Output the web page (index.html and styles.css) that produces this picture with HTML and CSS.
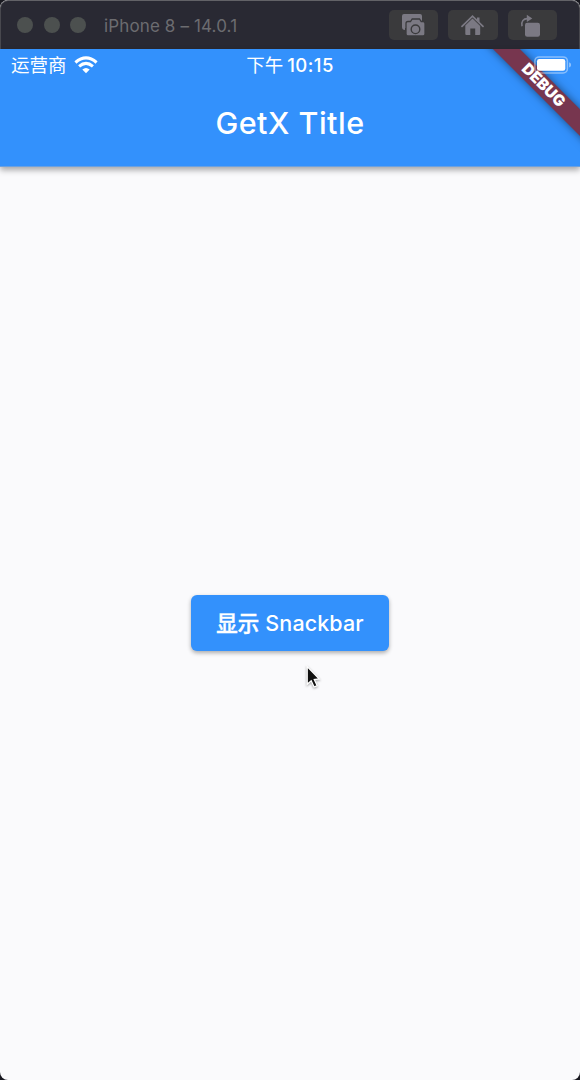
FILE: index.html
```html
<!DOCTYPE html>
<html lang="zh-CN">
<head>
<meta charset="utf-8">
<title>iPhone 8 – 14.0.1</title>
<link rel="stylesheet" href="styles.css">
</head>
<body>
<div class="window">
  <header class="titlebar">
    <div class="lights"><i></i><i></i><i></i></div>
    <span class="device">iPhone 8 – 14.0.1</span>
    <div class="tools">
      <div class="tool">
        <svg width="49" height="30" viewBox="0 0 49 30">
          <path d="M15 4H31Q33 4 33 6V18H16V20Q13 20 13 17V6Q13 4 15 4Z" fill="#7b7983"/>
          <path d="M19 11.5H21.5L23.2 9H30.5L32.2 11.5H34Q36 11.5 36 13.5V24Q36 26 34 26H19Q17 26 17 24V13.5Q17 11.5 19 11.5Z" fill="#7b7983" stroke="#3a3a3c" stroke-width="1.3"/>
          <circle cx="26.5" cy="19.3" r="4.3" fill="#7b7983" stroke="#3a3a3c" stroke-width="1.4"/>
        </svg>
      </div>
      <div class="tool">
        <svg width="49" height="30" viewBox="0 0 49 30">
          <path d="M14 16.3L24.5 6.2L35 16.3" fill="none" stroke="#7b7983" stroke-width="1.8" stroke-linecap="round"/>
          <path d="M29 7.5H31.5V13L29 10.6Z" fill="#7b7983"/>
          <path d="M24.5 8.6L32.2 15.9V24Q32.2 25 31.2 25H27.2V18.5H22.3V25H18.3Q17.3 25 17.3 24V15.6Z" fill="#7b7983"/>
        </svg>
      </div>
      <div class="tool">
        <svg width="49" height="30" viewBox="0 0 49 30">
          <rect x="17" y="12.7" width="15" height="14" rx="2.2" fill="#7b7983"/>
          <path d="M14 16.3C12.8 11.5 15.5 8.5 19.5 8.6" fill="none" stroke="#7b7983" stroke-width="1.6"/>
          <path d="M18.8 4.8L24.3 8.6L18.8 12Z" fill="#7b7983"/>
        </svg>
      </div>
    </div>
  </header>
  <main class="screen">
    <div class="appbar">
      <div class="debug-clip"><div class="debug"><span>DEBUG</span></div></div>
      <div class="status">
        <div class="carrier">
          <span>运营商</span>
          <svg width="24" height="18" viewBox="0 0 24 18">
            <g fill="none" stroke="#fff" stroke-width="3">
              <path d="M1.4 6.5Q12 -2.8 22.6 6.5"/>
              <path d="M5.1 10.4Q12 4.4 18.9 10.4"/>
            </g>
            <path d="M8.3 13.6Q12 10.4 15.7 13.6L12 17.3Z" fill="#fff"/>
          </svg>
        </div>
        <div class="time"><span>下午</span><b>10:15</b></div>
        <svg class="battery" width="38" height="18" viewBox="0 0 38 18">
          <rect x=".9" y=".9" width="32.5" height="16" rx="4.2" fill="none" stroke="#fff" stroke-opacity=".42" stroke-width="1.5"/>
          <rect x="3" y="3" width="28.3" height="11.8" rx="2.3" fill="#fff"/>
          <path d="M35.2 6.3Q37 7.2 37 8.9T35.2 11.5Z" fill="#fff" fill-opacity=".5"/>
        </svg>
      </div>
      <h1 class="title">GetX Title</h1>
    </div>
    <div class="content">
      <button class="button"><span class="cjk">显示</span><span class="latin">Snackbar</span></button>
    </div>
  </main>
  <svg class="cursor" width="18" height="28" viewBox="0 0 18 28">
    <path d="M2.2 2.5V20.3L6.2 16.7L9.1 23L12.2 21.6L9.3 15.6L14.3 15Z" fill="#111" stroke="#fff" stroke-width="1.3"/>
  </svg>
</div>
</body>
</html>
```
FILE: styles.css
```css
* { box-sizing: border-box; }
body { margin: 0; background: #18181f; font-family: Inter, "Noto Sans CJK SC", sans-serif; }
.window { position: relative; width: 580px; height: 1080px; display: flex; flex-direction: column; border-radius: 8px; overflow: hidden; background: #fafafc; }
.titlebar { height: 49px; flex: none; display: flex; align-items: center; padding: 0 22px 1px 16px; background: #292933; border: 1px solid #48484e; border-top-color: #626267; border-bottom: 0; border-radius: 8px 8px 0 0; }
.lights { display: flex; gap: 10.5px; }
.lights i { width: 16px; height: 16px; border-radius: 50%; background: #4c504f; }
.device { margin: 2px 0 0 18px; font-size: 17px; line-height: 24px; letter-spacing: .13px; color: #6c6c70; white-space: nowrap; }
.tools { margin-left: auto; display: flex; gap: 10px; }
.tool { width: 49.5px; height: 30px; border-radius: 5px; background: #3a3a3c; }
.tool svg { display: block; }
.screen { flex: 1; display: flex; flex-direction: column; }
.appbar { position: relative; height: 118px; flex: none; background: #3391fc; color: #fff; border-bottom: 1px solid #6ca1df; box-shadow: 0 3px 6px rgba(0,0,0,.34); }
.status { position: relative; height: 32px; display: grid; grid-template-columns: 1fr auto 1fr; align-items: center; padding: 0 8px 0 10px; }
.carrier { display: flex; align-items: center; gap: 7.5px; padding-left: 1px; font-size: 18.5px; line-height: 24px; font-weight: 400; }
.time { display: flex; align-items: center; gap: 4px; padding-right: 2px; font-size: 18.5px; line-height: 24px; }
.time b { font-weight: 500; letter-spacing: .45px; }
.battery { justify-self: end; }
.title { margin: 24px 0 0; text-align: center; font-size: 30.5px; line-height: 36px; font-weight: 500; letter-spacing: .5px; }
.debug-clip { position: absolute; top: 0; right: 0; width: 100px; height: 117px; overflow: hidden; }
.debug { position: absolute; left: -36px; top: 28px; width: 200px; height: 18.5px; display: flex; align-items: center; justify-content: center; padding-right: 2px; transform: rotate(45deg); background: #77364f; box-shadow: 0 0 9px rgba(0,0,0,.5); font-size: 15.5px; font-weight: 900; line-height: 18px; }
.content { flex: 1; display: flex; align-items: center; justify-content: center; padding-bottom: 1px; }
.button { width: 198px; height: 56px; display: flex; align-items: center; justify-content: center; gap: 6px; padding: 0; border: 0; border-radius: 6px; background: #3391fc; color: #fff; box-shadow: 0 2px 4px rgba(0,0,0,.32); font: 500 21.5px/30px Inter, "Noto Sans CJK SC", sans-serif; }
.cjk { -webkit-text-stroke: .4px #fff; }
.latin { letter-spacing: .1px; }
.cursor { position: absolute; left: 305px; top: 664px; filter: drop-shadow(0 1px 1px rgba(0,0,0,.35)); }
```
